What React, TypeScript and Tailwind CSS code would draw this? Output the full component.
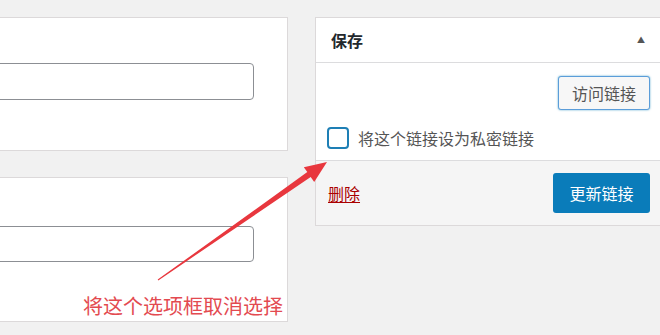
const cjk = { fontFamily: '"Noto Sans CJK SC", "Noto Sans", sans-serif' };

function Arrow() {
  return (
    <svg className="pointer-events-none absolute inset-0" width="660" height="335" viewBox="0 0 660 335">
      <polygon
        points="157.7,279.6 307.3,172.1 303.8,167.2 327,162 314.2,182 310.7,177.1 158.3,280.4"
        fill="#e8373e"
      />
    </svg>
  );
}

export default function App() {
  return (
    <div className="relative h-[335px] w-[660px] overflow-hidden bg-[#f1f1f1]" style={cjk}>
      <div className="flex items-start pt-[17px]">
        {/* left column */}
        <div className="-ml-[20px] flex w-[308px] shrink-0 flex-col gap-[26px]">
          <div className="h-[134px] border border-[#dcd9da] bg-white pt-[45px] pr-[33px]">
            <div className="h-[37px] rounded-[4px] border border-[#8c8f94] bg-white" />
          </div>
          <div className="flex h-[145px] flex-col border border-[#dcd9da] bg-white pt-[48px]">
            <div className="mr-[33px] h-[36px] rounded-[4px] border border-[#8c8f94] bg-white" />
            <div className="mt-[32px] pr-[4px] text-right text-[20px] leading-[24px] text-[#e34a50]">
              将这个选项框取消选择
            </div>
          </div>
        </div>

        {/* right panel */}
        <div className="ml-[27px] w-[350px] shrink-0 border border-[#dcd9da] bg-white">
          <div className="flex h-[45px] items-center justify-between border-b border-[#dcdcde] pl-[15px] pr-[19px]">
            <span className="text-[16px] font-bold text-[#23282d]">保存</span>
            <span className="text-[8px] text-[#555]">▲</span>
          </div>
          <div className="flex flex-col pt-[13px] pr-[14px] pb-[10px] pl-[11px]">
            <div className="flex justify-end">
              <button className="h-[34px] w-[92px] rounded-[3px] border border-[#5b9dd9] bg-[#f7f7f7] text-[16px] text-[#555] shadow-[0_0_2px_rgba(30,140,190,0.8)]">
                访问链接
              </button>
            </div>
            <label className="mt-[16px] flex items-center gap-[9px] text-[16px] text-[#555]">
              <span className="h-[22px] w-[22px] rounded-[4px] border-2 border-[#1e7fb5] bg-white" />
              将这个链接设为私密链接
            </label>
          </div>
          <div className="flex h-[65px] items-center justify-between border-t border-[#dcdcde] bg-[#f5f5f5] pl-[12px] pr-[14px]">
            <a className="text-[16px] text-[#a00] underline underline-offset-2">删除</a>
            <button className="h-[40px] w-[97px] rounded-[3px] bg-[#0a7cba] text-[16px] text-white">
              更新链接
            </button>
          </div>
        </div>
      </div>
      <Arrow />
    </div>
  );
}
